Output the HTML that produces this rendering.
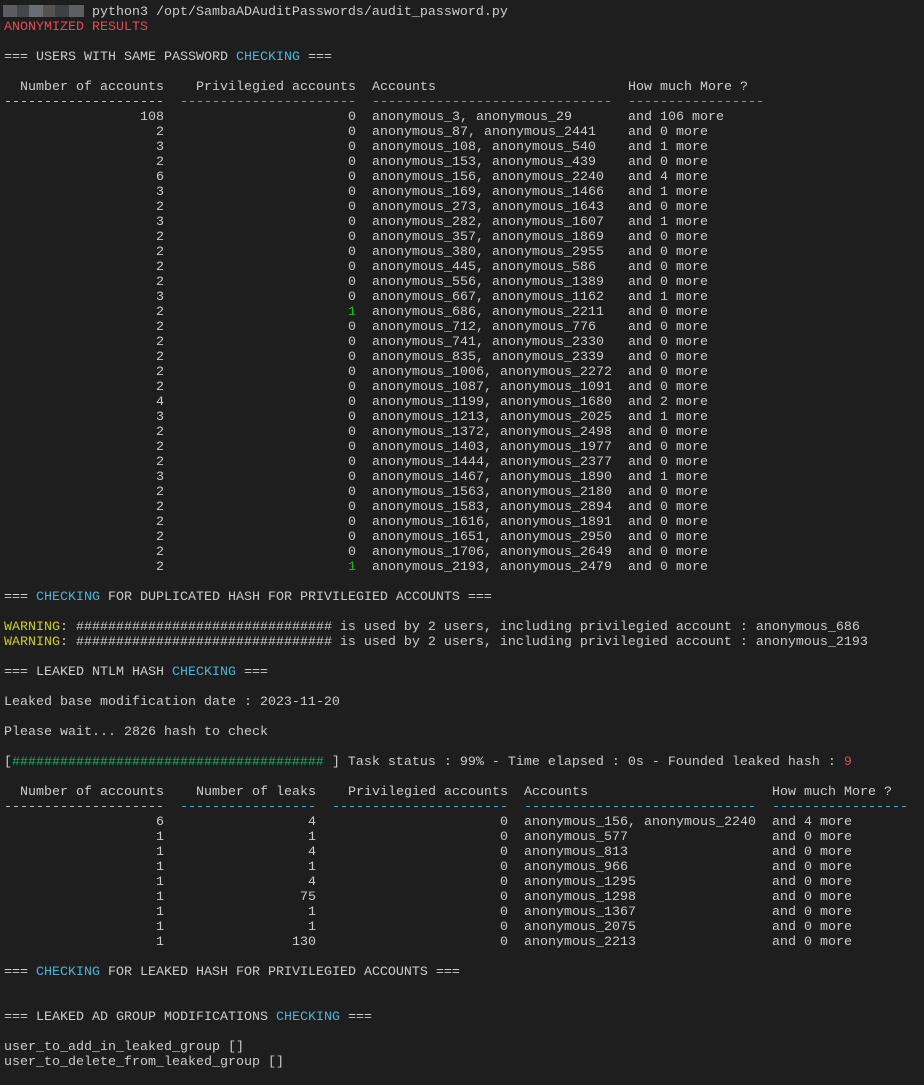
<!DOCTYPE html>
<html><head><meta charset="utf-8"><style>
html,body{margin:0;padding:0;background:#1e1e1e;}
body{width:924px;height:1085px;overflow:hidden;position:relative;}
#t{position:absolute;left:4px;top:5px;font-family:"Liberation Mono",monospace;font-size:13.333px;color:#cccccc;}
.l{height:15px;line-height:15px;white-space:pre;}
.l span{display:inline-block;}
.a{width:160px;text-align:right;}
.b{width:192px;text-align:right;}
.c{margin-left:16px;width:256px;}
.b2{width:152px;text-align:right;}
.c2{width:192px;text-align:right;}
.d2{margin-left:16px;width:248px;}
.cy{color:#4cb3d6;}
.r{color:#e74856;}
.g{color:#16c60c;}
.gh{color:#1fab6c;}
.y{color:#cdcd28;}
.blur{position:absolute;top:5px;height:12px;}
</style></head><body>
<div class="blur" style="left:3px;width:14px;background:#5a5c60"></div>
<div class="blur" style="left:17px;width:12px;background:#45474b"></div>
<div class="blur" style="left:29px;width:14px;background:#6a6e72"></div>
<div class="blur" style="left:43px;width:12px;background:#54524f"></div>
<div class="blur" style="left:55px;width:14px;background:#3f4044"></div>
<div class="blur" style="left:69px;width:15px;background:#5d5f63"></div>
<div id="t">
<div class="l">           python3 /opt/SambaADAuditPasswords/audit_password.py</div>
<div class="l r">ANONYMIZED RESULTS</div>
<div class="l"> </div>
<div class="l">=== USERS WITH SAME PASSWORD <span class="cy">CHECKING</span> ===</div>
<div class="l"> </div>
<div class="l"><span class="a">Number of accounts</span><span class="b">Privilegied accounts</span><span class="c">Accounts</span><span>How much More ?</span></div>
<div class="l"><span class="a">--------------------</span><span class="b cy">----------------------</span><span class="c cy">------------------------------</span><span class="cy">-----------------</span></div>
<div class="l"><span class="a">108</span><span class="b">0</span><span class="c">anonymous_3, anonymous_29</span><span>and 106 more</span></div>
<div class="l"><span class="a">2</span><span class="b">0</span><span class="c">anonymous_87, anonymous_2441</span><span>and 0 more</span></div>
<div class="l"><span class="a">3</span><span class="b">0</span><span class="c">anonymous_108, anonymous_540</span><span>and 1 more</span></div>
<div class="l"><span class="a">2</span><span class="b">0</span><span class="c">anonymous_153, anonymous_439</span><span>and 0 more</span></div>
<div class="l"><span class="a">6</span><span class="b">0</span><span class="c">anonymous_156, anonymous_2240</span><span>and 4 more</span></div>
<div class="l"><span class="a">3</span><span class="b">0</span><span class="c">anonymous_169, anonymous_1466</span><span>and 1 more</span></div>
<div class="l"><span class="a">2</span><span class="b">0</span><span class="c">anonymous_273, anonymous_1643</span><span>and 0 more</span></div>
<div class="l"><span class="a">3</span><span class="b">0</span><span class="c">anonymous_282, anonymous_1607</span><span>and 1 more</span></div>
<div class="l"><span class="a">2</span><span class="b">0</span><span class="c">anonymous_357, anonymous_1869</span><span>and 0 more</span></div>
<div class="l"><span class="a">2</span><span class="b">0</span><span class="c">anonymous_380, anonymous_2955</span><span>and 0 more</span></div>
<div class="l"><span class="a">2</span><span class="b">0</span><span class="c">anonymous_445, anonymous_586</span><span>and 0 more</span></div>
<div class="l"><span class="a">2</span><span class="b">0</span><span class="c">anonymous_556, anonymous_1389</span><span>and 0 more</span></div>
<div class="l"><span class="a">3</span><span class="b">0</span><span class="c">anonymous_667, anonymous_1162</span><span>and 1 more</span></div>
<div class="l"><span class="a">2</span><span class="b g">1</span><span class="c">anonymous_686, anonymous_2211</span><span>and 0 more</span></div>
<div class="l"><span class="a">2</span><span class="b">0</span><span class="c">anonymous_712, anonymous_776</span><span>and 0 more</span></div>
<div class="l"><span class="a">2</span><span class="b">0</span><span class="c">anonymous_741, anonymous_2330</span><span>and 0 more</span></div>
<div class="l"><span class="a">2</span><span class="b">0</span><span class="c">anonymous_835, anonymous_2339</span><span>and 0 more</span></div>
<div class="l"><span class="a">2</span><span class="b">0</span><span class="c">anonymous_1006, anonymous_2272</span><span>and 0 more</span></div>
<div class="l"><span class="a">2</span><span class="b">0</span><span class="c">anonymous_1087, anonymous_1091</span><span>and 0 more</span></div>
<div class="l"><span class="a">4</span><span class="b">0</span><span class="c">anonymous_1199, anonymous_1680</span><span>and 2 more</span></div>
<div class="l"><span class="a">3</span><span class="b">0</span><span class="c">anonymous_1213, anonymous_2025</span><span>and 1 more</span></div>
<div class="l"><span class="a">2</span><span class="b">0</span><span class="c">anonymous_1372, anonymous_2498</span><span>and 0 more</span></div>
<div class="l"><span class="a">2</span><span class="b">0</span><span class="c">anonymous_1403, anonymous_1977</span><span>and 0 more</span></div>
<div class="l"><span class="a">2</span><span class="b">0</span><span class="c">anonymous_1444, anonymous_2377</span><span>and 0 more</span></div>
<div class="l"><span class="a">3</span><span class="b">0</span><span class="c">anonymous_1467, anonymous_1890</span><span>and 1 more</span></div>
<div class="l"><span class="a">2</span><span class="b">0</span><span class="c">anonymous_1563, anonymous_2180</span><span>and 0 more</span></div>
<div class="l"><span class="a">2</span><span class="b">0</span><span class="c">anonymous_1583, anonymous_2894</span><span>and 0 more</span></div>
<div class="l"><span class="a">2</span><span class="b">0</span><span class="c">anonymous_1616, anonymous_1891</span><span>and 0 more</span></div>
<div class="l"><span class="a">2</span><span class="b">0</span><span class="c">anonymous_1651, anonymous_2950</span><span>and 0 more</span></div>
<div class="l"><span class="a">2</span><span class="b">0</span><span class="c">anonymous_1706, anonymous_2649</span><span>and 0 more</span></div>
<div class="l"><span class="a">2</span><span class="b g">1</span><span class="c">anonymous_2193, anonymous_2479</span><span>and 0 more</span></div>
<div class="l"> </div>
<div class="l">=== <span class="cy">CHECKING</span> FOR DUPLICATED HASH FOR PRIVILEGIED ACCOUNTS ===</div>
<div class="l"> </div>
<div class="l"><span class="y">WARNING</span>: ################################ is used by 2 users, including privilegied account : anonymous_686</div>
<div class="l"><span class="y">WARNING</span>: ################################ is used by 2 users, including privilegied account : anonymous_2193</div>
<div class="l"> </div>
<div class="l">=== LEAKED NTLM HASH <span class="cy">CHECKING</span> ===</div>
<div class="l"> </div>
<div class="l">Leaked base modification date : 2023-11-20</div>
<div class="l"> </div>
<div class="l">Please wait... 2826 hash to check</div>
<div class="l"> </div>
<div class="l">[<span class="gh">#######################################</span> ] Task status : 99% - Time elapsed : 0s - Founded leaked hash : <span class="r">9</span></div>
<div class="l"> </div>
<div class="l"><span class="a">Number of accounts</span><span class="b2">Number of leaks</span><span class="c2">Privilegied accounts</span><span class="d2">Accounts</span><span>How much More ?</span></div>
<div class="l"><span class="a">--------------------</span><span class="b2 cy">-----------------</span><span class="c2 cy">----------------------</span><span class="d2 cy">-----------------------------</span><span class="cy">-----------------</span></div>
<div class="l"><span class="a">6</span><span class="b2">4</span><span class="c2">0</span><span class="d2">anonymous_156, anonymous_2240</span><span>and 4 more</span></div>
<div class="l"><span class="a">1</span><span class="b2">1</span><span class="c2">0</span><span class="d2">anonymous_577</span><span>and 0 more</span></div>
<div class="l"><span class="a">1</span><span class="b2">4</span><span class="c2">0</span><span class="d2">anonymous_813</span><span>and 0 more</span></div>
<div class="l"><span class="a">1</span><span class="b2">1</span><span class="c2">0</span><span class="d2">anonymous_966</span><span>and 0 more</span></div>
<div class="l"><span class="a">1</span><span class="b2">4</span><span class="c2">0</span><span class="d2">anonymous_1295</span><span>and 0 more</span></div>
<div class="l"><span class="a">1</span><span class="b2">75</span><span class="c2">0</span><span class="d2">anonymous_1298</span><span>and 0 more</span></div>
<div class="l"><span class="a">1</span><span class="b2">1</span><span class="c2">0</span><span class="d2">anonymous_1367</span><span>and 0 more</span></div>
<div class="l"><span class="a">1</span><span class="b2">1</span><span class="c2">0</span><span class="d2">anonymous_2075</span><span>and 0 more</span></div>
<div class="l"><span class="a">1</span><span class="b2">130</span><span class="c2">0</span><span class="d2">anonymous_2213</span><span>and 0 more</span></div>
<div class="l"> </div>
<div class="l">=== <span class="cy">CHECKING</span> FOR LEAKED HASH FOR PRIVILEGIED ACCOUNTS ===</div>
<div class="l"> </div>
<div class="l"> </div>
<div class="l">=== LEAKED AD GROUP MODIFICATIONS <span class="cy">CHECKING</span> ===</div>
<div class="l"> </div>
<div class="l">user_to_add_in_leaked_group []</div>
<div class="l">user_to_delete_from_leaked_group []</div>
</div>
</body></html>
